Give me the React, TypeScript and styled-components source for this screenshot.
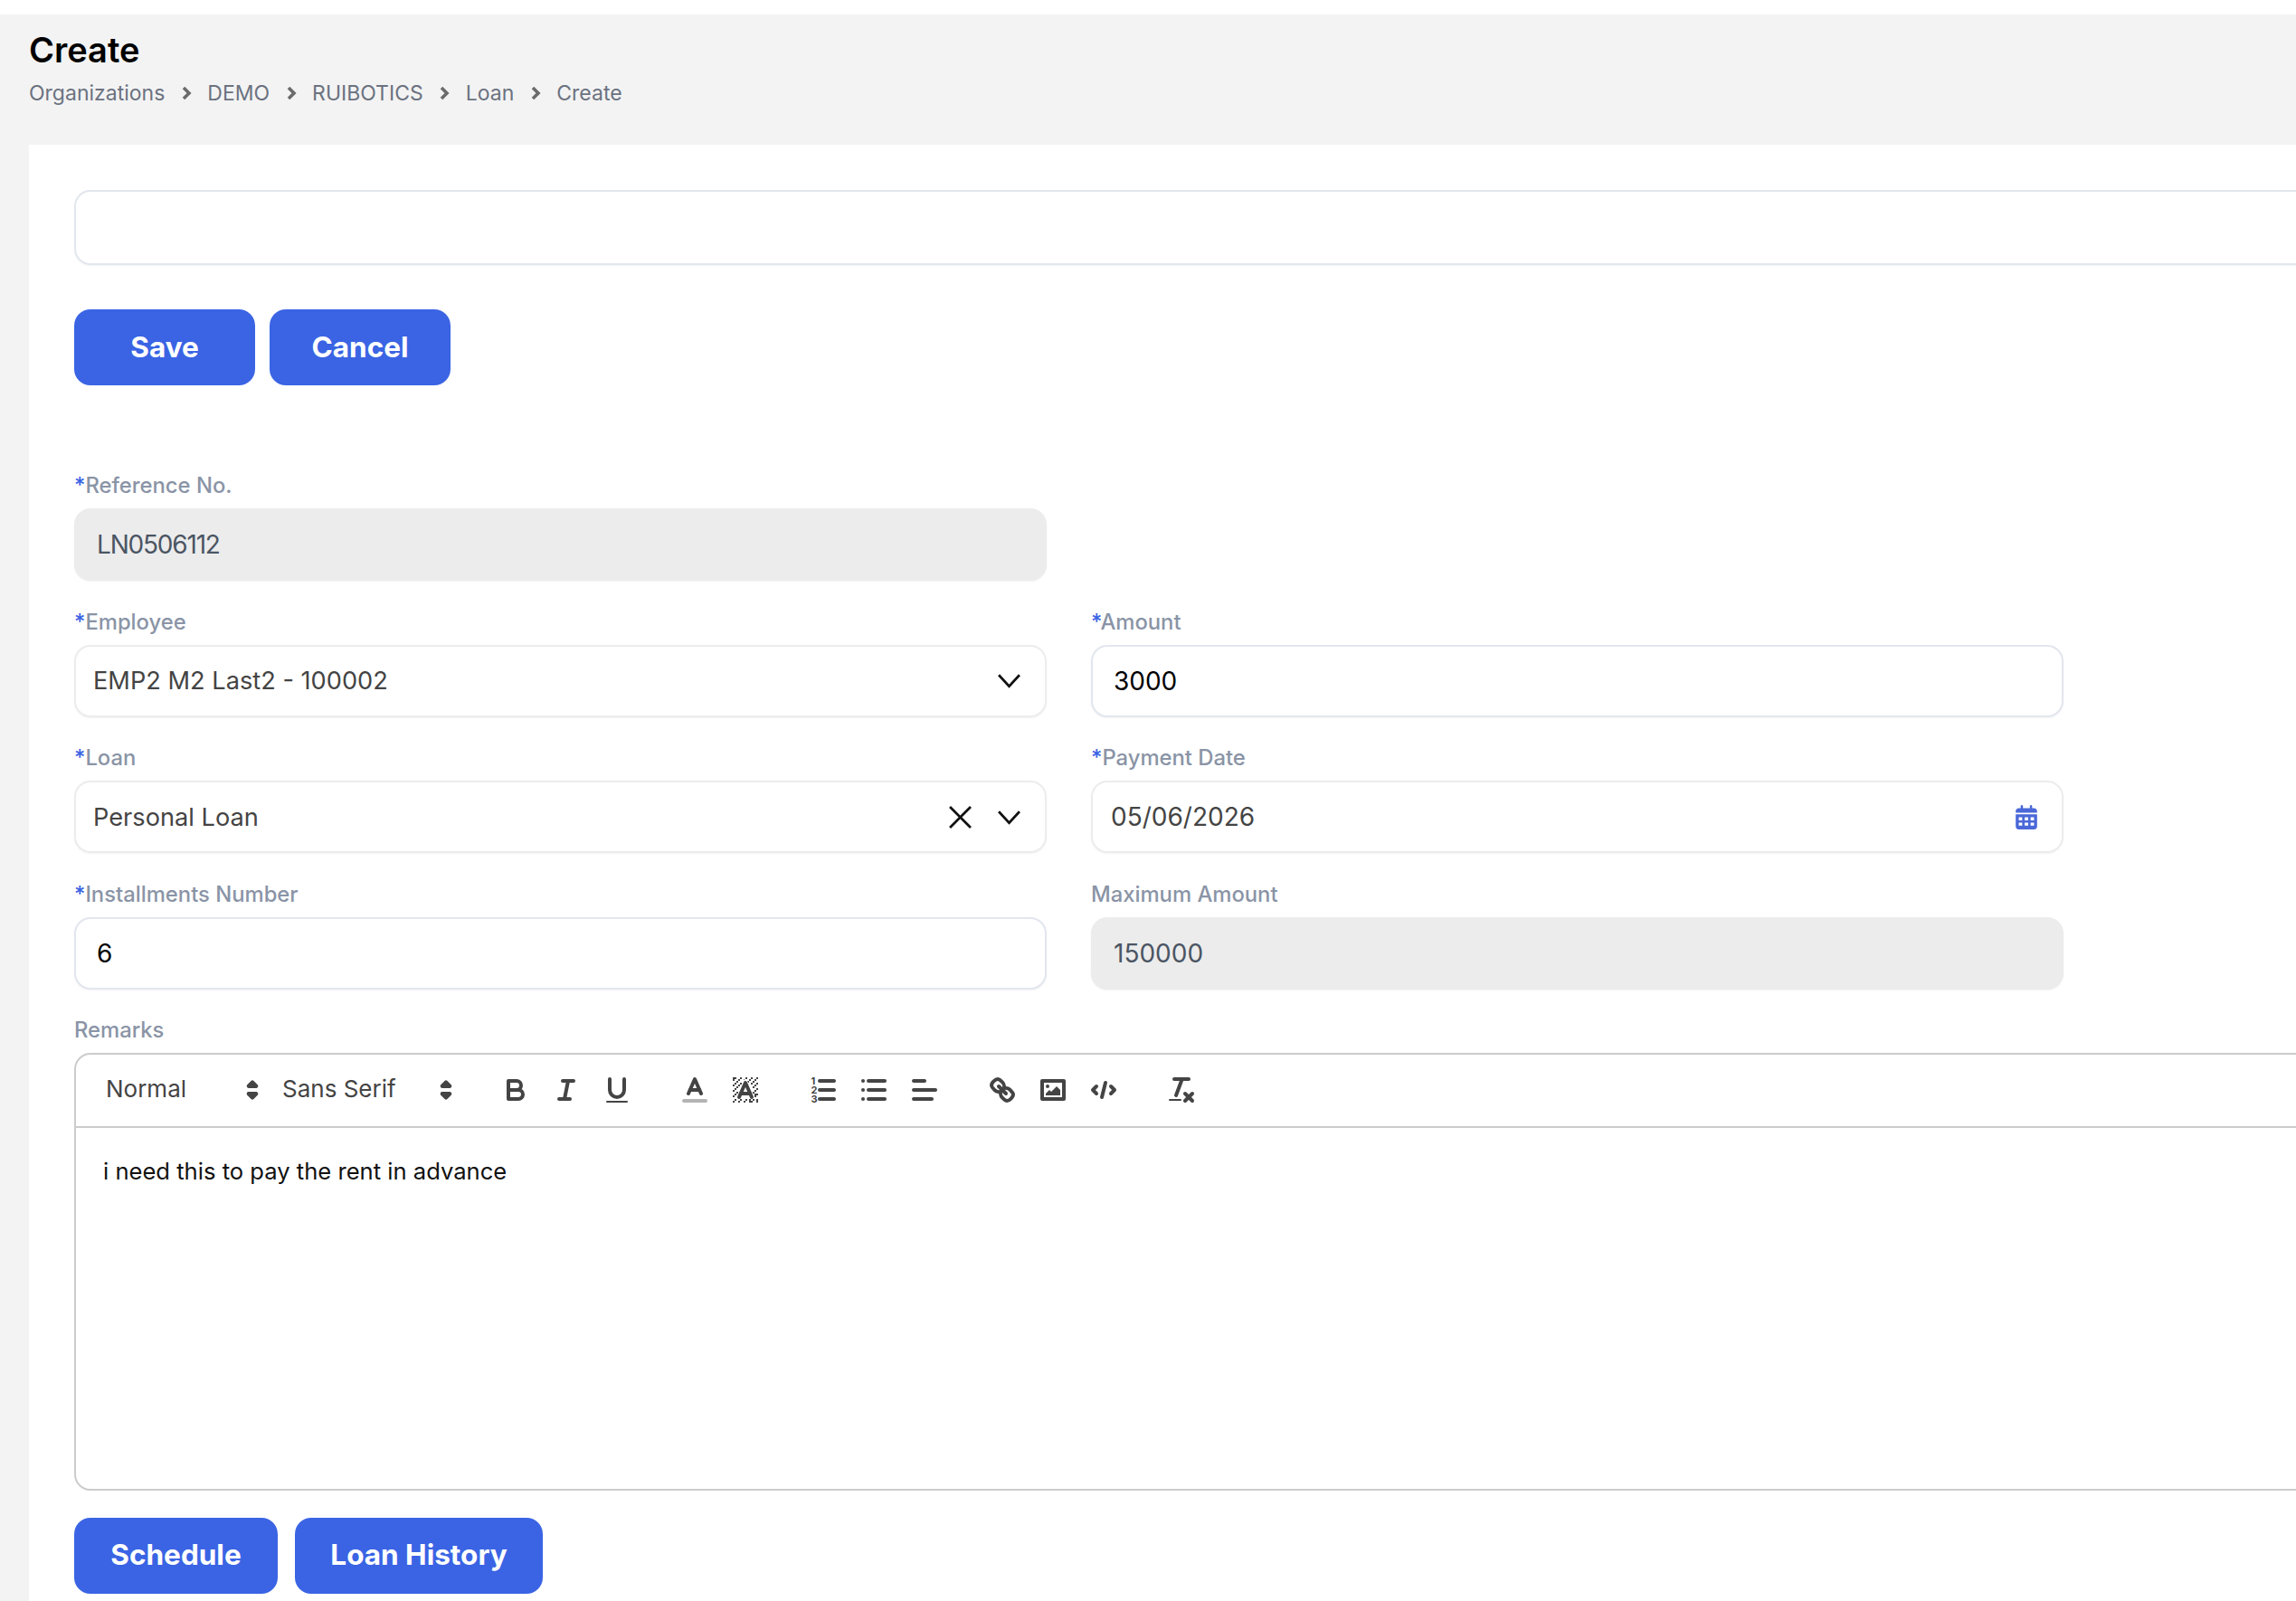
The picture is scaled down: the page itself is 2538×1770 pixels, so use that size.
import React from "react";
import styled, { createGlobalStyle } from "styled-components";

const GlobalStyle = createGlobalStyle`
  html, body {
    margin: 0;
    width: 2538px;
    height: 1770px;
    overflow: hidden;
    background: #fff;
    font-family: "Inter", "Liberation Sans", sans-serif;
  }

  * {
    box-sizing: border-box;
  }
`;

const crumbs = ["Organizations", "DEMO", "RUIBOTICS", "Loan", "Create"];

// checker cells of the quill background icon
const checker = [
  [2, 2], [3, 2], [6, 2], [9, 2], [12, 2], [15, 2],
  [2, 3], [5, 3], [8, 3], [11, 3], [14, 3],
  [4, 4], [10, 4], [13, 4], [3, 5], [6, 5], [12, 5], [15, 5],
  [2, 6], [5, 6], [14, 6], [4, 7], [13, 7], [3, 8], [15, 8],
  [2, 9], [4, 10], [14, 9], [13, 10], [3, 11], [14, 11], [15, 11],
  [2, 12], [14, 12], [3, 14], [15, 14], [2, 15], [5, 15], [6, 14], [8, 15],
  [9, 14], [11, 15], [11, 14], [12, 15], [13, 14], [15, 15],
];

const BoldIcon = () => (
  <QuillSvg viewBox="0 0 18 18">
    <path d="M5,4H9.5A2.5,2.5,0,0,1,12,6.5v0A2.5,2.5,0,0,1,9.5,9H5V4Z" />
    <path d="M5,9h5.5A2.5,2.5,0,0,1,13,11.5v0A2.5,2.5,0,0,1,10.5,14H5V9Z" />
  </QuillSvg>
);

const ItalicIcon = () => (
  <QuillSvg viewBox="0 0 18 18">
    <line x1="7" x2="13" y1="4" y2="4" />
    <line x1="5" x2="11" y1="14" y2="14" />
    <line x1="8" x2="10" y1="14" y2="4" />
  </QuillSvg>
);

const UnderlineIcon = () => (
  <QuillSvg viewBox="0 0 18 18">
    <path d="M5,3V9a4.012,4.012,0,0,0,4,4H9a4.012,4.012,0,0,0,4-4V3" />
    <rect className="fill" height="1" rx=".5" ry=".5" width="12" x="3" y="15" />
  </QuillSvg>
);

const ColorIcon = () => (
  <QuillSvg viewBox="0 0 18 18">
    <line x1="3" x2="15" y1="15" y2="15" opacity="0.4" />
    <polyline points="5.5 11 9 3 12.5 11" />
    <line x1="11.63" x2="6.38" y1="9" y2="9" />
  </QuillSvg>
);

const BackgroundIcon = () => (
  <QuillSvg viewBox="0 0 18 18">
    {checker.map(([x, y]) => (
      <rect key={`${x}-${y}`} className="fill" width="1" height="1" x={x} y={y} />
    ))}
    <polygon className="halo" points="5 13 9 4 13 13" />
    <polyline points="5.5 13 9 5 12.5 13" />
    <line x1="11.63" x2="6.38" y1="11" y2="11" />
  </QuillSvg>
);

const OrderedIcon = () => (
  <QuillSvg viewBox="0 0 18 18">
    <line x1="7" x2="15" y1="4" y2="4" />
    <line x1="7" x2="15" y1="9" y2="9" />
    <line x1="7" x2="15" y1="14" y2="14" />
    <text x="2.2" y="5.9">1</text>
    <text x="2.2" y="10.9">2</text>
    <text x="2.2" y="15.9">3</text>
  </QuillSvg>
);

const BulletIcon = () => (
  <QuillSvg viewBox="0 0 18 18">
    <line x1="6" x2="15" y1="4" y2="4" />
    <line x1="6" x2="15" y1="9" y2="9" />
    <line x1="6" x2="15" y1="14" y2="14" />
    <line x1="3" x2="3" y1="4" y2="4" />
    <line x1="3" x2="3" y1="9" y2="9" />
    <line x1="3" x2="3" y1="14" y2="14" />
  </QuillSvg>
);

const AlignIcon = () => (
  <QuillSvg viewBox="0 0 18 18">
    <line x1="3" x2="15" y1="9" y2="9" />
    <line x1="3" x2="13" y1="14" y2="14" />
    <line x1="3" x2="9" y1="4" y2="4" />
  </QuillSvg>
);

const LinkIcon = () => (
  <QuillSvg viewBox="0 0 18 18">
    <line x1="7" x2="11" y1="7" y2="11" />
    <path d="M8.9,4.577a3.476,3.476,0,0,1,.36,4.679A3.476,3.476,0,0,1,4.577,8.9C3.185,7.5,2.035,6.4,4.217,4.217S7.5,3.185,8.9,4.577Z" />
    <path d="M13.423,9.1a3.476,3.476,0,0,0-4.679-.36,3.476,3.476,0,0,0,.36,4.679c1.392,1.392,2.5,2.542,4.679.36S14.815,10.5,13.423,9.1Z" />
  </QuillSvg>
);

const ImageIcon = () => (
  <QuillSvg viewBox="0 0 18 18">
    <rect height="10" width="12" x="3" y="4" />
    <circle className="fill" cx="6" cy="7" r="1" />
    <polyline className="fill" points="5 12 5 11 7 9 8 10 11 7 13 9 13 12 5 12" />
  </QuillSvg>
);

const CodeIcon = () => (
  <QuillSvg viewBox="0 0 18 18">
    <polyline points="5 7 3 9 5 11" />
    <polyline points="13 7 15 9 13 11" />
    <line x1="10" x2="8" y1="5" y2="13" />
  </QuillSvg>
);

const CleanIcon = () => (
  <QuillSvg viewBox="0 0 18 18">
    <line x1="5" x2="13" y1="3" y2="3" />
    <line x1="6" x2="9.35" y1="12" y2="3" />
    <line x1="11" x2="15" y1="11" y2="15" />
    <line x1="15" x2="11" y1="11" y2="15" />
    <rect className="fill" height="1" rx=".5" ry=".5" width="7" x="2" y="14" />
  </QuillSvg>
);

const StepperIcon = () => (
  <StepperSvg viewBox="0 0 18 18">
    <polygon points="7 11 9 13 11 11 7 11" />
    <polygon points="7 7 9 5 11 7 7 7" />
  </StepperSvg>
);

const Chevron = () => (
  <SelectIcon viewBox="0 0 24 24">
    <polyline points="1 6 12 18 23 6" />
  </SelectIcon>
);

const Cross = () => (
  <SelectIcon viewBox="0 0 24 24">
    <line x1="1" y1="1" x2="23" y2="23" />
    <line x1="23" y1="1" x2="1" y2="23" />
  </SelectIcon>
);

const CalendarIcon = () => (
  <CalendarSvg viewBox="0 0 448 512">
    <path d="M152 24c0-13-11-24-24-24s-24 11-24 24v40H64C29 64 0 93 0 128v32h448v-32c0-35-29-64-64-64h-40V24c0-13-11-24-24-24s-24 11-24 24v40H152V24z" />
    <path
      fillRule="evenodd"
      d="M448 192H0v256c0 35 29 64 64 64h320c35 0 64-29 64-64V192zM64 256h72v64H64v-64zm124 0h72v64h-72v-64zm124 0h72v64h-72v-64zM64 368h72v64H64v-64zm124 0h72v64h-72v-64zm124 0h72v64h-72v-64z"
    />
  </CalendarSvg>
);

const App: React.FC = () => {
  return (
    <>
      <GlobalStyle />
      <Shell>
        <Header>
          <Title>Create</Title>
          <Breadcrumbs>
            {crumbs.map((crumb, index) => (
              <React.Fragment key={crumb}>
                {index > 0 && (
                  <CrumbArrow viewBox="0 0 12 16">
                    <polyline points="3 2 9 8 3 14" />
                  </CrumbArrow>
                )}
                <span>{crumb}</span>
              </React.Fragment>
            ))}
          </Breadcrumbs>
        </Header>

        <Panel>
          <BlankInput />

          <ButtonRow $gap={16} $top={49}>
            <PrimaryButton $width={200}>Save</PrimaryButton>
            <PrimaryButton $width={200}>Cancel</PrimaryButton>
          </ButtonRow>

          <FormGrid>
            <Field>
              <Label><Star>*</Star>Reference No.</Label>
              <Input $disabled $tight>LN0506112</Input>
            </Field>
            <span />

            <Field>
              <Label><Star>*</Star>Employee</Label>
              <SelectBox>
                <SelectValue>EMP2 M2 Last2 - 100002</SelectValue>
                <SelectIcons>
                  <Chevron />
                </SelectIcons>
              </SelectBox>
            </Field>
            <Field>
              <Label><Star>*</Star>Amount</Label>
              <Input $dark>3000</Input>
            </Field>

            <Field>
              <Label><Star>*</Star>Loan</Label>
              <SelectBox>
                <SelectValue>Personal Loan</SelectValue>
                <SelectIcons>
                  <Cross />
                  <Chevron />
                </SelectIcons>
              </SelectBox>
            </Field>
            <Field>
              <Label><Star>*</Star>Payment Date</Label>
              <DateBox>
                <DateValue>05/06/2026</DateValue>
                <CalendarIcon />
              </DateBox>
            </Field>

            <Field>
              <Label><Star>*</Star>Installments Number</Label>
              <Input $dark>6</Input>
            </Field>
            <Field>
              <Label>Maximum Amount</Label>
              <Input $disabled>150000</Input>
            </Field>
          </FormGrid>

          <RemarksLabel>Remarks</RemarksLabel>
          <Editor>
            <Toolbar>
              <Picker $width={195}>
                <PickerLabel>Normal</PickerLabel>
                <StepperIcon />
              </Picker>
              <Picker $width={214}>
                <PickerLabel>Sans Serif</PickerLabel>
                <StepperIcon />
              </Picker>
              <ToolGroup>
                <ToolButton><BoldIcon /></ToolButton>
                <ToolButton><ItalicIcon /></ToolButton>
                <ToolButton><UnderlineIcon /></ToolButton>
              </ToolGroup>
              <ToolGroup>
                <ToolButton><ColorIcon /></ToolButton>
                <ToolButton><BackgroundIcon /></ToolButton>
              </ToolGroup>
              <ToolGroup>
                <ToolButton><OrderedIcon /></ToolButton>
                <ToolButton><BulletIcon /></ToolButton>
                <ToolButton><AlignIcon /></ToolButton>
              </ToolGroup>
              <ToolGroup>
                <ToolButton><LinkIcon /></ToolButton>
                <ToolButton><ImageIcon /></ToolButton>
                <ToolButton><CodeIcon /></ToolButton>
              </ToolGroup>
              <ToolGroup>
                <ToolButton><CleanIcon /></ToolButton>
              </ToolGroup>
            </Toolbar>
            <EditorBody>i need this to pay the rent in advance</EditorBody>
          </Editor>

          <ButtonRow $gap={19} $top={30}>
            <PrimaryButton $width={225}>Schedule</PrimaryButton>
            <PrimaryButton $width={274}>Loan History</PrimaryButton>
          </ButtonRow>
        </Panel>
      </Shell>
    </>
  );
};

export default App;

const Shell = styled.div`
  width: 2538px;
  height: 1770px;
  margin-top: 16px;
  padding-left: 32px;
  background: #f3f3f3;
  overflow: hidden;
`;

const Header = styled.div`
  display: flex;
  flex-direction: column;
  height: 144px;
  padding-top: 16px;
`;

const Title = styled.div`
  font-size: 38px;
  line-height: 46px;
  font-weight: 600;
  color: #000;
`;

const Breadcrumbs = styled.div`
  display: flex;
  align-items: center;
  gap: 17.5px;
  margin-top: 10px;
  font-size: 23px;
  line-height: 30px;
  color: #6b7280;
`;

const CrumbArrow = styled.svg`
  width: 12px;
  height: 16px;
  fill: none;
  stroke: #6b6b6b;
  stroke-width: 3.6;
`;

const Panel = styled.div`
  width: 2700px;
  height: 1700px;
  padding: 50px 0 0 50px;
  background: #fff;
`;

const BlankInput = styled.div`
  width: 100%;
  height: 83px;
  border: 2px solid #e2e6ee;
  border-radius: 18px;
  box-shadow: 0 1px 2px rgba(0, 0, 0, 0.05);
`;

const ButtonRow = styled.div<{ $gap: number; $top: number }>`
  display: flex;
  gap: ${(p) => p.$gap}px;
  margin-top: ${(p) => p.$top}px;
`;

const PrimaryButton = styled.button<{ $width: number }>`
  width: ${(p) => p.$width}px;
  height: 84px;
  padding: 0 0 2px;
  border: none;
  border-radius: 18px;
  background: #3a64e4;
  color: #fff;
  font-family: inherit;
  font-size: 31.5px;
  font-weight: 700;
`;

const FormGrid = styled.div`
  display: grid;
  grid-template-columns: 1075px 1075px;
  column-gap: 49px;
  row-gap: 29.6px;
  margin-top: 95px;
`;

const Field = styled.div`
  display: flex;
  flex-direction: column;
  gap: 9px;
`;

const Label = styled.label`
  font-size: 23.8px;
  line-height: 32px;
  font-weight: 500;
  color: #8a94a6;
`;

const RemarksLabel = styled(Label)`
  display: block;
  margin-top: 29px;
  margin-bottom: 9px;
`;

const Star = styled.span`
  color: #3a64e4;
`;

const Input = styled.div<{ $disabled?: boolean; $dark?: boolean; $tight?: boolean }>`
  display: flex;
  align-items: center;
  height: 80px;
  padding-left: 23px;
  border: 2px solid ${(p) => (p.$disabled ? "#ececec" : "#e2e6ee")};
  border-radius: 18px;
  background: ${(p) => (p.$disabled ? "#ececec" : "#fff")};
  box-shadow: 0 1px 2px rgba(0, 0, 0, 0.05);
  font-size: 28px;
  letter-spacing: ${(p) => (p.$tight ? "-1.2px" : "0")};
  color: ${(p) => (p.$dark ? "#000" : "#4b5563")};
`;

const SelectBox = styled.div`
  display: flex;
  align-items: center;
  justify-content: space-between;
  height: 80px;
  padding: 0 27px 0 19px;
  border: 2px solid #ececec;
  border-radius: 18px;
  box-shadow: 0 1px 2px rgba(0, 0, 0, 0.05);
`;

const DateBox = styled(SelectBox)`
  padding: 0 27px 0 20px;
`;

const SelectValue = styled.span`
  font-size: 27.2px;
  color: #444;
`;

const DateValue = styled(SelectValue)`
  font-size: 28px;
`;

const SelectIcons = styled.div`
  display: flex;
  align-items: center;
  gap: 29px;
`;

const SelectIcon = styled.svg`
  width: 25px;
  height: 25px;
  fill: none;
  stroke: #111;
  stroke-width: 2.6;
`;

const CalendarSvg = styled.svg`
  width: 24px;
  height: 27px;
  fill: #4a68d8;
`;

const Editor = styled.div`
  height: 484px;
  border: 2px solid #ccc;
  border-radius: 18px;
`;

const Toolbar = styled.div`
  display: flex;
  align-items: center;
  height: 81px;
  padding-left: 19px;
  border-bottom: 2px solid #ccc;
`;

const Picker = styled.div<{ $width: number }>`
  display: flex;
  align-items: center;
  justify-content: space-between;
  width: ${(p) => p.$width}px;
  padding: 0 0 0 14px;
  font-size: 26px;
  color: #444;
`;

const PickerLabel = styled.span`
  margin-bottom: 3px;
`;

const StepperSvg = styled.svg`
  width: 38px;
  height: 38px;
  fill: #444;
  stroke: #444;
  stroke-width: 2;
  stroke-linejoin: round;
`;

const ToolGroup = styled.div`
  display: flex;
  margin-left: 30px;
`;

const ToolButton = styled.div`
  display: flex;
  align-items: center;
  justify-content: center;
  width: 56px;
  height: 40px;
`;

const QuillSvg = styled.svg`
  width: 36px;
  height: 36px;
  fill: none;
  stroke: #444;
  stroke-width: 2;
  stroke-linecap: round;
  stroke-linejoin: round;

  .fill {
    fill: #444;
    stroke: none;
  }

  .halo {
    fill: #fff;
    stroke: #fff;
  }

  text {
    font-family: "Inter", sans-serif;
    font-size: 5.5px;
    font-weight: 700;
    fill: #444;
    stroke: none;
  }
`;

const EditorBody = styled.div`
  padding: 30px 0 0 30px;
  font-size: 25.6px;
  line-height: 36px;
  color: #111;
`;
